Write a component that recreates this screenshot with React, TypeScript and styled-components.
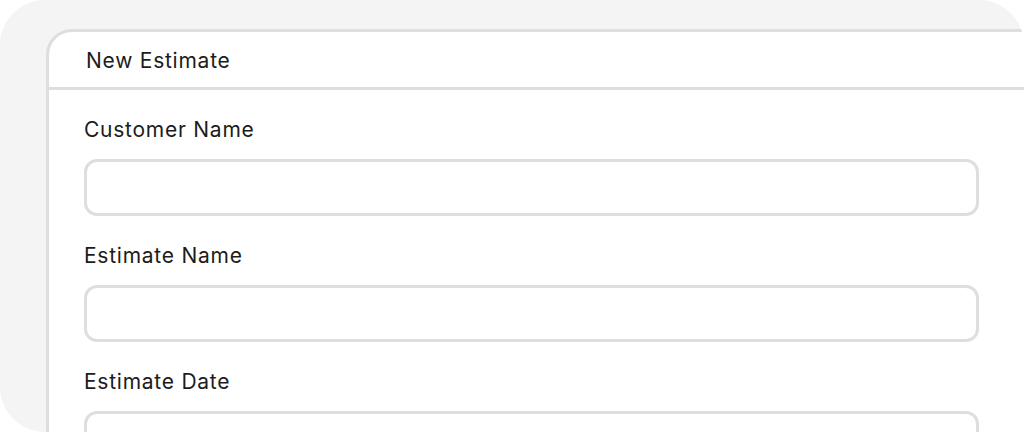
import React from "react";
import styled, { createGlobalStyle } from "styled-components";

const fields = ["Customer Name", "Estimate Name", "Estimate Date"];

export default function App() {
  return (
    <>
      <GlobalStyle />
      <Backdrop>
        <Card>
          <CardHeader>New Estimate</CardHeader>
          <CardBody>
            {fields.map((label) => (
              <Field key={label}>
                <Label>{label}</Label>
                <Input type="text" />
              </Field>
            ))}
          </CardBody>
        </Card>
      </Backdrop>
    </>
  );
}

const GlobalStyle = createGlobalStyle`
  html, body {
    margin: 0;
    padding: 0;
    background: #ffffff;
    overflow: hidden;
  }
  body {
    font-family: Inter, "Noto Sans", sans-serif;
    color: #1c1c1c;
  }
`;

const Backdrop = styled.div`
  box-sizing: border-box;
  height: 432px;
  width: 1024px;
  background: #f4f4f4;
  border-radius: 45px;
  padding: 29px 0 0 46px;
  overflow: hidden;
`;

const Card = styled.div`
  box-sizing: border-box;
  width: 1040px;
  min-height: 460px;
  background: #ffffff;
  border: 3px solid #dedede;
  border-radius: 26px 0 0 0;
`;

const CardHeader = styled.div`
  box-sizing: border-box;
  height: 58px;
  display: flex;
  align-items: center;
  padding: 2px 0 0 37px;
  border-bottom: 3px solid #dedede;
  font-size: 21px;
  letter-spacing: 0.75px;
  font-weight: 400;
`;

const CardBody = styled.div`
  display: flex;
  flex-direction: column;
  gap: 28px;
  padding: 28px 0 0 35px;
`;

const Field = styled.div`
  display: flex;
  flex-direction: column;
`;

const Label = styled.label`
  font-size: 21px;
  letter-spacing: 0.75px;
  line-height: 24px;
  margin-bottom: 17px;
`;

const Input = styled.input`
  box-sizing: border-box;
  width: 895px;
  height: 57px;
  border: 3px solid #dedede;
  border-radius: 13px;
  background: #ffffff;
  outline: none;
  font: inherit;
  padding: 0 16px;
`;
